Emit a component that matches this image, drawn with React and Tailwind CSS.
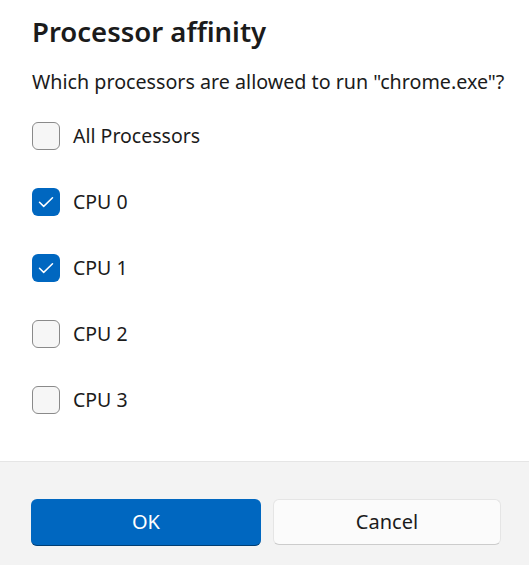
import React, { useState } from 'react';

const font = { fontFamily: '"Noto Sans", "Open Sans", sans-serif' };

function Box({ checked, onClick, label }) {
  return (
    <button onClick={onClick} className="flex items-center gap-[13px] h-[28px] text-left">
      {checked ? (
        <span className="w-[28px] h-[28px] rounded-[6px] bg-[#0067c0] flex items-center justify-center">
          <svg width="16" height="16" viewBox="0 0 16 16" fill="none">
            <path d="M1.5 8.2l4.2 4.2L14.5 3.8" stroke="white" strokeWidth="1.5" strokeLinecap="round" strokeLinejoin="round" />
          </svg>
        </span>
      ) : (
        <span className="w-[28px] h-[28px] rounded-[6px] border border-[#8a8a8a] bg-[#f6f6f6]" />
      )}
      <span className="text-[19.5px] text-[#1b1b1b]">{label}</span>
    </button>
  );
}

export default function App() {
  const [cpus, setCpus] = useState([true, true, false, false]);
  const all = cpus.every(Boolean);

  return (
    <div className="w-[529px] h-[565px] bg-white flex flex-col" style={font}>
      <div className="flex-1 px-[32px] pt-[12px]">
        <h1 className="text-[27.5px] font-semibold text-[#1b1b1b] leading-[40px]">Processor affinity</h1>
        <p className="text-[19.7px] text-[#1b1b1b] mt-[15px] leading-[30px] whitespace-nowrap">Which processors are allowed to run "chrome.exe"?</p>
        <div className="flex flex-col gap-[38px] mt-[25px]">
          <Box checked={all} label="All Processors" onClick={() => setCpus(cpus.map(() => !all))} />
          {cpus.map((c, i) => (
            <Box key={i} checked={c} label={`CPU ${i}`} onClick={() => setCpus(cpus.map((v, j) => (j === i ? !v : v)))} />
          ))}
        </div>
      </div>
      <div className="h-[104px] bg-[#f3f3f3] border-t border-[#e5e5e5] flex gap-[12px] pl-[31px] pr-[28px] pt-[37px]">
        <button className="shrink-0 w-[230px] h-[47px] rounded-[6px] bg-[#0067c0] border-b border-[#003e73] text-white text-[20px]">OK</button>
        <button className="shrink-0 w-[228px] h-[46px] rounded-[6px] bg-[#fbfbfb] border border-[#e5e5e5] border-b-[#cccccc] text-[#1b1b1b] text-[20px]">Cancel</button>
      </div>
    </div>
  );
}
